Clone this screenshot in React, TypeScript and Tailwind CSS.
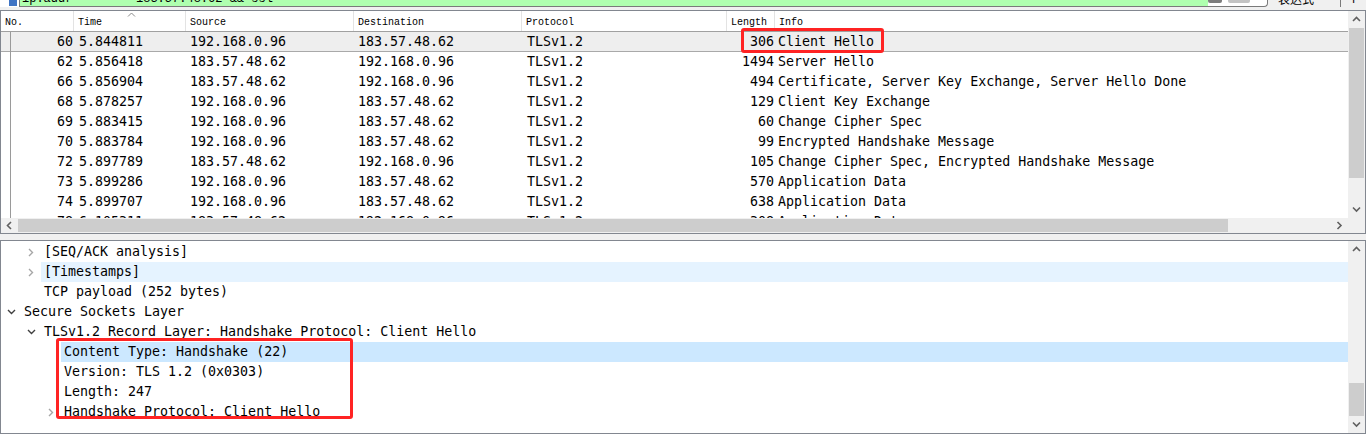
import React from "react";

type Packet = {
    no: number;
    time: string;
    src: string;
    dst: string;
    proto: string;
    len: number;
    info: string;
};

const packets: Packet[] = [
    { no: 60, time: "5.844811", src: "192.168.0.96", dst: "183.57.48.62", proto: "TLSv1.2", len: 306, info: "Client Hello" },
    { no: 62, time: "5.856418", src: "183.57.48.62", dst: "192.168.0.96", proto: "TLSv1.2", len: 1494, info: "Server Hello" },
    { no: 66, time: "5.856904", src: "183.57.48.62", dst: "192.168.0.96", proto: "TLSv1.2", len: 494, info: "Certificate, Server Key Exchange, Server Hello Done" },
    { no: 68, time: "5.878257", src: "192.168.0.96", dst: "183.57.48.62", proto: "TLSv1.2", len: 129, info: "Client Key Exchange" },
    { no: 69, time: "5.883415", src: "192.168.0.96", dst: "183.57.48.62", proto: "TLSv1.2", len: 60, info: "Change Cipher Spec" },
    { no: 70, time: "5.883784", src: "192.168.0.96", dst: "183.57.48.62", proto: "TLSv1.2", len: 99, info: "Encrypted Handshake Message" },
    { no: 72, time: "5.897789", src: "183.57.48.62", dst: "192.168.0.96", proto: "TLSv1.2", len: 105, info: "Change Cipher Spec, Encrypted Handshake Message" },
    { no: 73, time: "5.899286", src: "192.168.0.96", dst: "183.57.48.62", proto: "TLSv1.2", len: 570, info: "Application Data" },
    { no: 74, time: "5.899707", src: "192.168.0.96", dst: "183.57.48.62", proto: "TLSv1.2", len: 638, info: "Application Data" },
    { no: 78, time: "6.105311", src: "183.57.48.62", dst: "192.168.0.96", proto: "TLSv1.2", len: 308, info: "Application Data" },
];

type DetailRow = {
    level: 0 | 1 | 2;
    chevron?: "open" | "closed";
    text: string;
    highlight?: "hover" | "selected";
};

const details: DetailRow[] = [
    { level: 1, chevron: "closed", text: "[SEQ/ACK analysis]" },
    { level: 1, chevron: "closed", text: "[Timestamps]", highlight: "hover" },
    { level: 1, text: "TCP payload (252 bytes)" },
    { level: 0, chevron: "open", text: "Secure Sockets Layer" },
    { level: 1, chevron: "open", text: "TLSv1.2 Record Layer: Handshake Protocol: Client Hello" },
    { level: 2, text: "Content Type: Handshake (22)", highlight: "selected" },
    { level: 2, text: "Version: TLS 1.2 (0x0303)" },
    { level: 2, text: "Length: 247" },
    { level: 2, chevron: "closed", text: "Handshake Protocol: Client Hello" },
];

const mono = "font-['DejaVu_Sans_Mono',monospace] text-[13.3px] leading-[20px] text-black";

function Arrow({ dir }: { dir: "up" | "down" | "left" | "right" }) {
    const d = {
        up: "M1 5 L4.5 1.5 L8 5",
        down: "M1 1.5 L4.5 5 L8 1.5",
        left: "M5 1 L1.5 4.5 L5 8",
        right: "M1.5 1 L5 4.5 L1.5 8",
    }[dir];
    const horiz = dir === "left" || dir === "right";
    return (
        <svg width={horiz ? 7 : 9} height={horiz ? 9 : 7} viewBox={horiz ? "0 0 7 9" : "0 0 9 7"}>
            <path d={d} fill="none" stroke="#606060" strokeWidth={1.6} />
        </svg>
    );
}

function VScroll({ before, thumb }: { before: number; thumb: number }) {
    return (
        <div className="w-[17px] flex flex-col bg-[#f0f0f0]">
            <div className="h-[17px] flex items-center justify-center"><Arrow dir="up" /></div>
            <div className="flex-1 flex flex-col px-px">
                <div style={{ height: before }} />
                <div className="bg-[#cdcdcd]" style={{ height: thumb }} />
            </div>
            <div className="h-[17px] flex items-center justify-center"><Arrow dir="down" /></div>
        </div>
    );
}

function Chevron({ kind }: { kind: "open" | "closed" }) {
    if (kind === "open") {
        return (
            <svg width="9" height="6" viewBox="0 0 9 6">
                <path d="M1 1 L4.5 4.5 L8 1" fill="none" stroke="#404040" strokeWidth={1.4} />
            </svg>
        );
    }
    return (
        <svg width="6" height="9" viewBox="0 0 6 9">
            <path d="M1 1 L4.5 4.5 L1 8" fill="none" stroke="#a6a6a6" strokeWidth={1.4} />
        </svg>
    );
}

function FilterBar() {
    // only the bottom few pixels of the display filter toolbar are on screen
    return (
        <div className="h-[7px] overflow-hidden flex bg-[#f0f0f0]">
            <div className="w-[20px] h-[22px] -mt-[15px] bg-white border-r border-[#7a7a7a] flex items-end justify-end pr-[2px] pb-[1px]">
                <div className="w-[8px] h-[12px] bg-[#3f74c4]" />
            </div>
            <div className="w-[1248px] h-[22px] -mt-[15px] flex border-b border-r border-[#7a7a7a] rounded-br-[4px] bg-white">
                <div className="w-[1188px] bg-[#afffaf] flex items-center pt-[6px] pl-[2px] gap-[42px] font-['Liberation_Mono',monospace] text-[12px] text-black">
                    <span>ip.addr ==</span>
                    <span>183.57.48.62 &amp;&amp; ssl</span>
                </div>
                <div className="w-[14px] bg-[#7d7d7d] my-[3px] rounded-[2px]" />
                <div className="w-[22px] bg-[#c3c3c3] my-[3px] ml-[6px] rounded-[2px]" />
            </div>
            <div className="w-[72px] h-[22px] -mt-[15px] flex items-center pt-[6px] pl-[10px] font-['Noto_Sans_CJK_SC',sans-serif] text-[12px] text-black">
                表达式…
            </div>
            <div className="w-px h-[22px] -mt-[15px] bg-[#7a7a7a]" />
            <div className="flex-1 h-[22px] -mt-[15px] flex items-center justify-center pt-[6px] text-[14px] text-black font-['Liberation_Sans',sans-serif]">+</div>
        </div>
    );
}

function PacketList() {
    const header = "font-['Liberation_Mono',monospace] text-[10px] text-black pl-[4px] pt-[2px] border-r border-[#e3e3e3] flex items-center";
    return (
        <div className="border border-[#828790] bg-white flex flex-col">
            <div className="flex h-[207px]">
                <div className="flex-1 flex flex-col min-w-0">
                    <div className="h-[21px] flex border-b border-[#a0a0a0] relative">
                        <div className={`w-[73px] ${header}`}>No.</div>
                        <div className={`w-[112px] ${header} relative`}>
                            Time
                            <svg className="absolute left-[53px] top-[1px]" width="9" height="5" viewBox="0 0 9 5">
                                <path d="M1 4.5 L4.5 1 L8 4.5" fill="none" stroke="#8a8a8a" strokeWidth={1} />
                            </svg>
                        </div>
                        <div className={`w-[168px] ${header}`}>Source</div>
                        <div className={`w-[168px] ${header}`}>Destination</div>
                        <div className={`w-[205px] ${header}`}>Protocol</div>
                        <div className={`w-[48px] ${header}`}>Length</div>
                        <div className={`flex-1 ${header} border-r-0`}>Info</div>
                    </div>
                    <div className="flex-1 overflow-hidden relative">
                        <div className="absolute left-[9px] top-0 bottom-0 w-px bg-[#9a9a9a]" />
                        {packets.map((p, i) => (
                            <div
                                key={p.no}
                                className={
                                    i === 0
                                        ? `h-[20px] flex whitespace-pre bg-[#eeeeee] border-b border-[#a9a9a9] ${mono}`
                                        : `h-[20px] flex whitespace-pre ${mono}`
                                }
                            >
                                <div className="w-[73px] text-right pr-[1px]">{p.no}</div>
                                <div className="w-[112px] pl-[5px]">{p.time}</div>
                                <div className="w-[168px] pl-[4px]">{p.src}</div>
                                <div className="w-[168px] pl-[4px]">{p.dst}</div>
                                <div className="w-[205px] pl-[5px]">{p.proto}</div>
                                <div className="w-[48px] text-right pr-[1px]">{p.len}</div>
                                <div className="flex-1 pl-[3px]">{p.info}</div>
                            </div>
                        ))}
                    </div>
                </div>
                <VScroll before={0} thumb={150} />
            </div>
            <div className="h-[15px] flex bg-[#f0f0f0]">
                <div className="w-[17px] flex items-center justify-center"><Arrow dir="left" /></div>
                <div className="w-[1210px] bg-[#cdcdcd] my-px" />
                <div className="flex-1" />
                <div className="w-[17px] flex items-center justify-center"><Arrow dir="right" /></div>
                <div className="w-[17px] bg-[#f0f0f0]" />
            </div>
        </div>
    );
}

function DetailTree() {
    return (
        <div className="border border-[#828790] bg-white flex h-[194px]">
            <div className="flex-1 flex flex-col min-w-0 whitespace-pre pt-px">
                {details.map((r, i) => (
                    <div key={i} className="h-[20px] flex">
                        {r.level >= 1 && <div className="w-[20px]" />}
                        {r.level >= 2 && <div className="w-[20px]" />}
                        <div className="w-[20px] flex items-center justify-center">
                            {r.chevron && <Chevron kind={r.chevron} />}
                        </div>
                        <div
                            className={
                                r.highlight === "selected"
                                    ? `flex-1 pl-[3px] bg-[#cce8ff] ${mono}`
                                    : r.highlight === "hover"
                                        ? `flex-1 pl-[3px] bg-[#e5f3ff] ${mono}`
                                        : `flex-1 pl-[3px] ${mono}`
                            }
                        >
                            {r.text}
                        </div>
                    </div>
                ))}
            </div>
            <VScroll before={125} thumb={33} />
        </div>
    );
}

export default function App() {
    return (
        <div className="w-[1366px] h-[434px] bg-[#f0f0f0] overflow-hidden relative">
            <FilterBar />
            <div className="h-[3px]" />
            <PacketList />
            <div className="h-[6px]" />
            <DetailTree />

            {/* red annotation boxes */}
            <div className="absolute left-[741px] top-[28px] w-[143px] h-[25px] border-[3px] border-[#ff2323] rounded-[3px] pointer-events-none" />
            <div className="absolute left-[56px] top-[338px] w-[297px] h-[81px] border-[3px] border-[#ff2323] rounded-[3px] pointer-events-none" />
        </div>
    );
}
